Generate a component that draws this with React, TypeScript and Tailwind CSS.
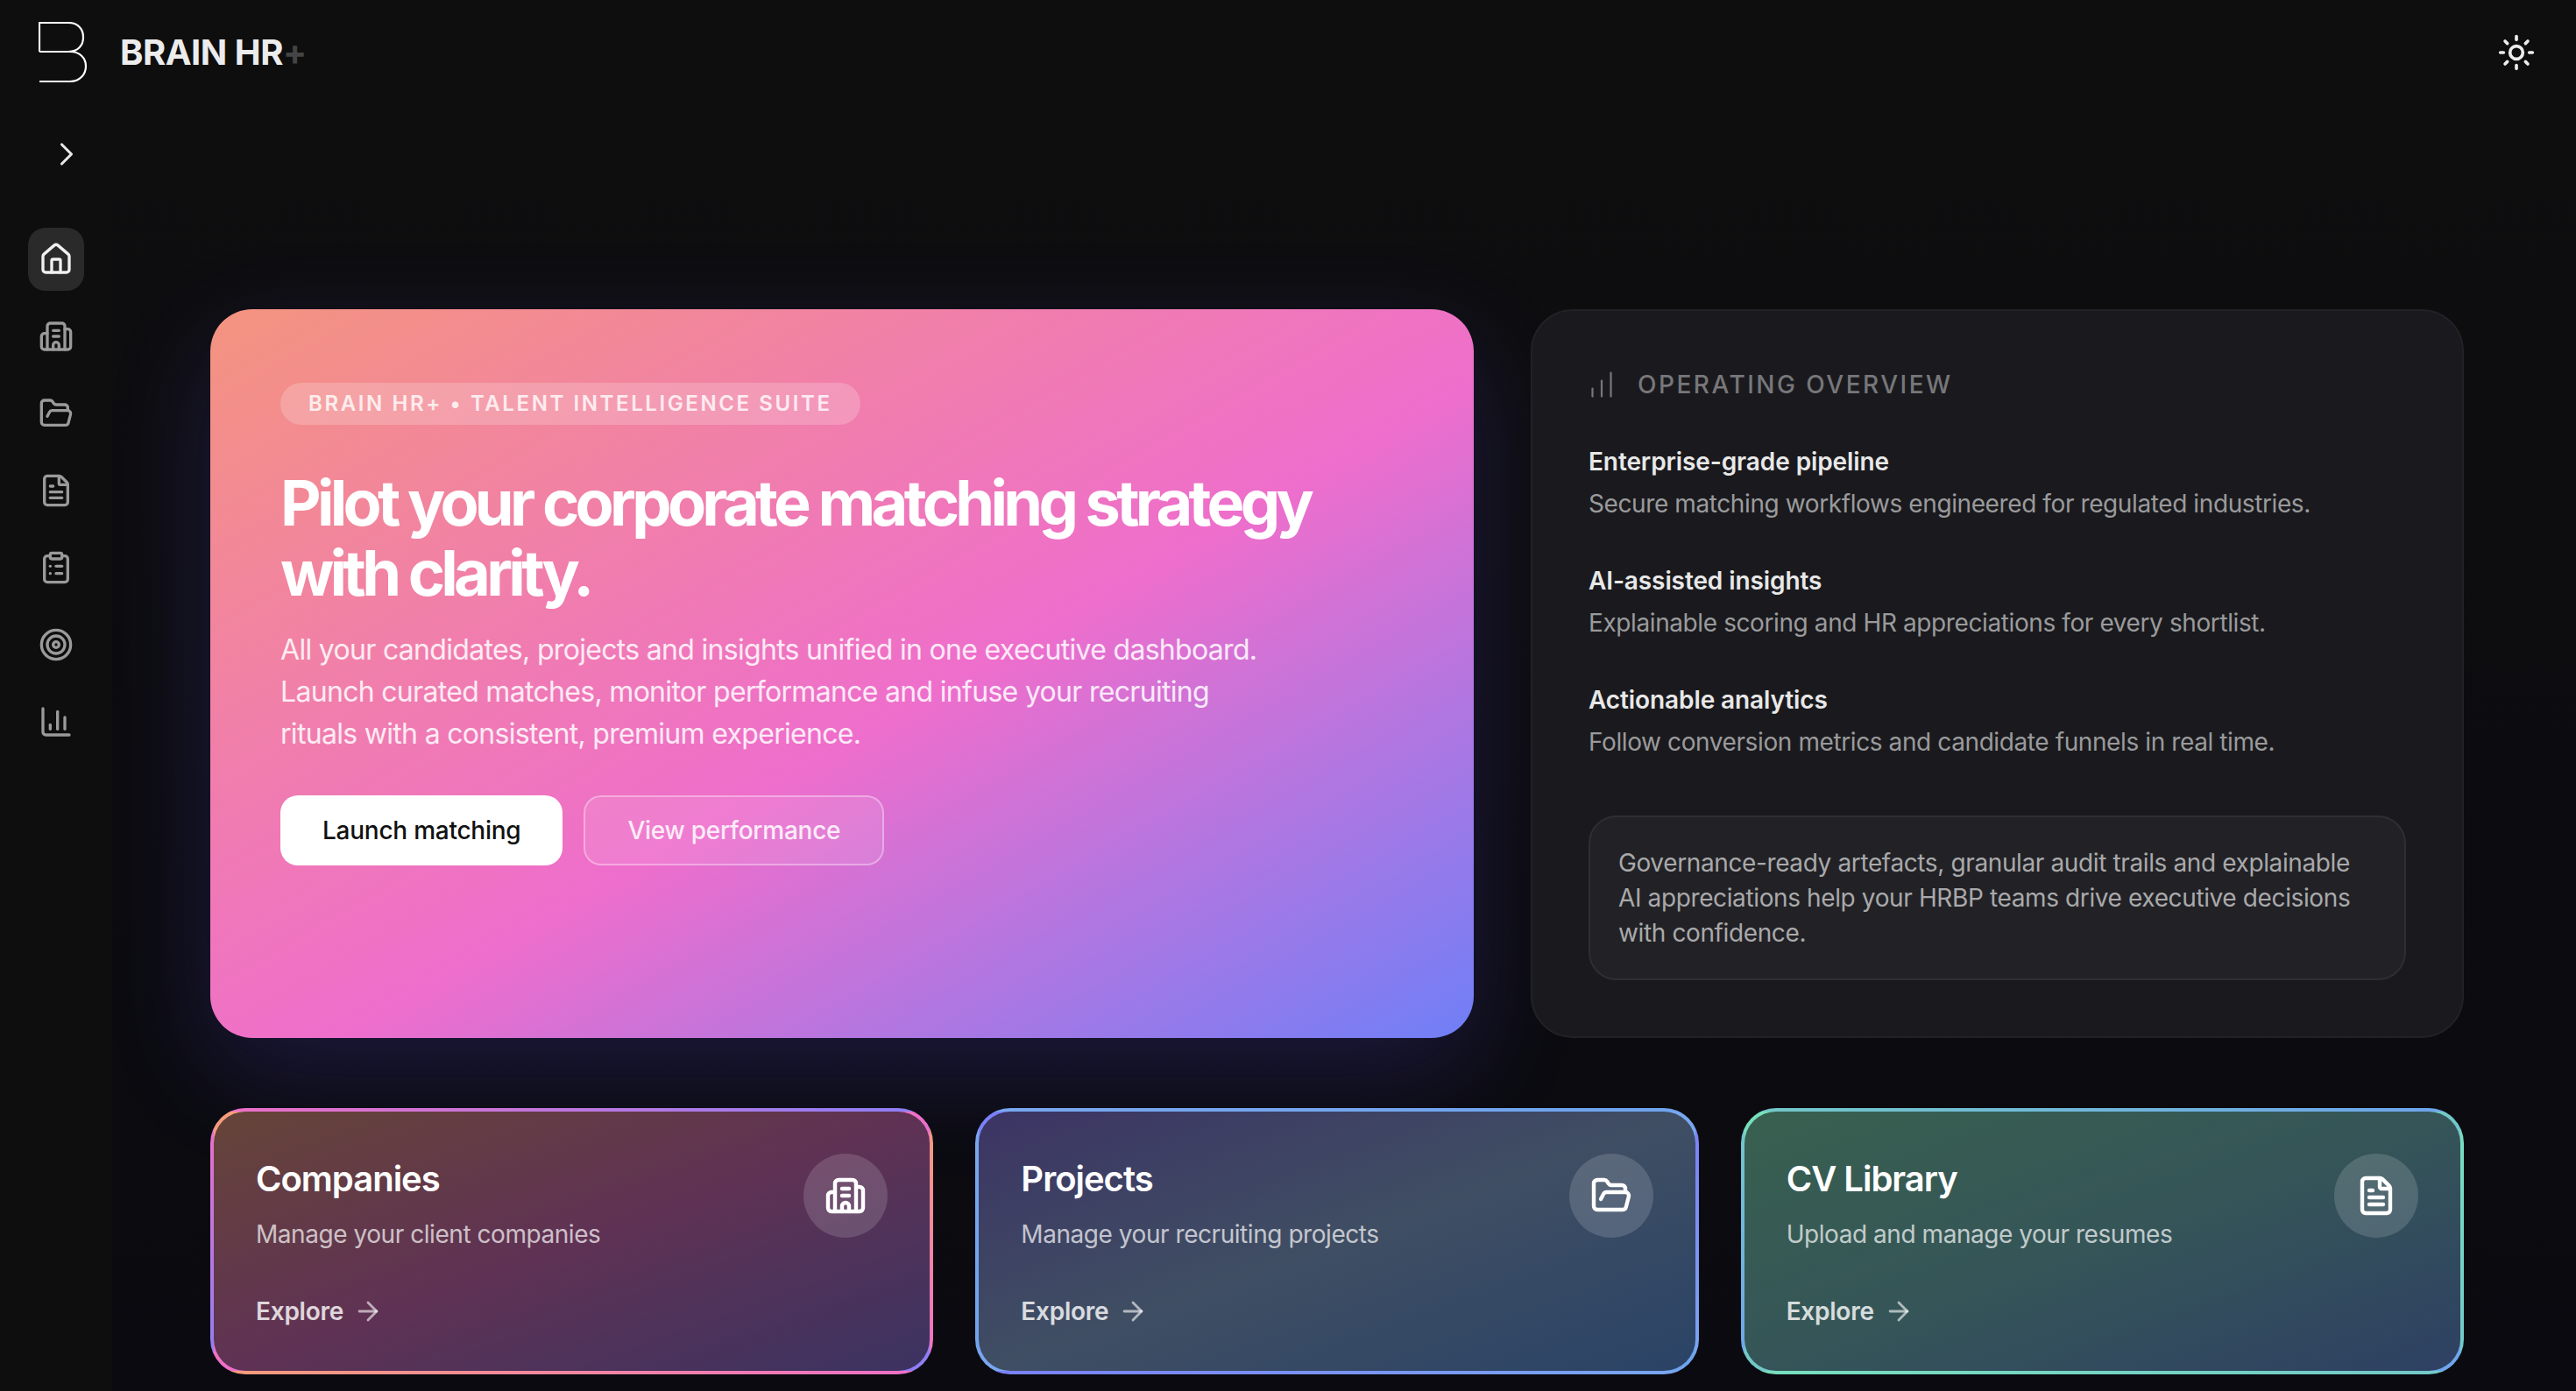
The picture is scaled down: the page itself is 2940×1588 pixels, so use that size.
import { ArrowRight, BarChart3, Building2, ChartNoAxesColumnIncreasing, ChevronRight, ClipboardList, FileText, FolderOpen, Home, Sun, Target } from "lucide-react";

const navItems = [Building2, FolderOpen, FileText, ClipboardList, Target, BarChart3];

const overview = [
  {
    title: "Enterprise-grade pipeline",
    text: "Secure matching workflows engineered for regulated industries.",
  },
  {
    title: "AI-assisted insights",
    text: "Explainable scoring and HR appreciations for every shortlist.",
  },
  {
    title: "Actionable analytics",
    text: "Follow conversion metrics and candidate funnels in real time.",
  },
];

function Logo() {
  return (
    <svg width="56" height="70" viewBox="0 0 56 70" fill="none" stroke="#fff" strokeWidth="2.2">
      <path d="M1 34V1h33c11 0 17 7 17 16.500S45 34 34 34H1h35c11 0 18 7 18 16.500S47 68 36 68H1" />
    </svg>
  );
}

function FeatureCard({
  title,
  text,
  icon: Icon,
  borderClass,
  fillClass,
}: {
  title: string;
  text: string;
  icon: typeof Building2;
  borderClass: string;
  fillClass: string;
}) {
  return (
    <div className={`h-[304px] flex-1 rounded-[40px] border-4 border-transparent ${borderClass}`}>
      <div className={`flex h-full items-start justify-between rounded-[36px] py-12 pl-[48px] pr-[48px] ${fillClass}`}>
        <div>
          <h3 className="text-[40px] leading-[58px] font-semibold tracking-[-1px] text-white">{title}</h3>
          <p className="mt-[14px] text-[28px] leading-[40px] tracking-[-0.45px] text-white/70">{text}</p>
          <div className="mt-[48px] flex items-center gap-[11px] text-[28px] leading-[40px] font-semibold tracking-[-0.25px] text-white/80">
            Explore
            <ArrowRight size={34} strokeWidth={2} className="text-white/60" />
          </div>
        </div>
        <div className="flex h-24 w-24 shrink-0 items-center justify-center rounded-full bg-white/15">
          <Icon size={48} strokeWidth={2.2} className="text-white" />
        </div>
      </div>
    </div>
  );
}

export default function App() {
  return (
    <div className="flex h-[1588px] overflow-hidden bg-[#0e0e0f] font-['Inter',sans-serif] text-white">
      <aside className="relative z-10 w-[128px] shrink-0 bg-[#0e0e0f]">
        <div className="flex h-[120px] items-center pl-[44px]">
          <Logo />
        </div>
        <div className="flex h-[112px] items-center pl-[54px]">
          <ChevronRight size={44} strokeWidth={1.7} className="text-[#e8e8e8]" />
        </div>
        <nav className="mt-[28px] flex flex-col items-center gap-4 pl-0">
          <div className="flex h-[72px] w-16 items-center justify-center rounded-[20px] bg-[#2a2a2b]">
            <Home size={40} className="text-[#f0f0f0]" />
          </div>
          {navItems.map((Icon, i) => (
            <div key={i} className="flex h-[72px] w-16 items-center justify-center">
              <Icon size={40} className="text-[#9a9a9a]" />
            </div>
          ))}
        </nav>
      </aside>

      <div className="flex min-w-0 flex-1 flex-col bg-[linear-gradient(to_bottom,#0e0e0f_10%,#0a0a10_100%)]">
        <header className="flex h-[120px] items-center justify-between pr-[46px]">
          <div className="-ml-[128px] flex pl-[137px]">
            <span className="relative z-20 text-[40px] font-bold tracking-[-0.5px] text-[#ececec]">
              BRAIN HR<span className="text-[#444]">+</span>
            </span>
          </div>
          <Sun size={44} className="text-[#ececec]" />
        </header>

        <main className="flex flex-1 flex-col gap-[80px] pt-[233px] pl-[112px] pr-[128px]">
          <div className="flex h-[832px] gap-[65px]">
            <section className="w-[1442px] shrink-0 rounded-[48px] bg-[linear-gradient(to_bottom_right,#f4947f_0%,#ee6ecc_55%,#6f7ff7_100%)] px-[80px] pt-[84px] shadow-[0_40px_120px_rgba(99,80,241,0.2)]">
              <span className="inline-block rounded-full bg-white/20 px-[32px] py-[10px] text-[24px] leading-[28px] font-semibold tracking-[2.6px] text-white/80">
                BRAIN HR+ • TALENT INTELLIGENCE SUITE
              </span>
              <h1 className="mt-[49px] max-w-[1260px] text-[72px] leading-[80px] font-bold tracking-[-4.7px] text-white">
                Pilot your corporate matching strategy with clarity.
              </h1>
              <p className="mt-[24px] max-w-[1136px] text-[32px] leading-[48px] tracking-[-0.69px] text-white/85">
                All your candidates, projects and insights unified in one executive dashboard. Launch curated matches, monitor performance and infuse your recruiting rituals with a consistent, premium experience.
              </p>
              <div className="mt-[46px] flex gap-6">
                <button className="h-20 rounded-[20px] bg-white px-12 text-[28px] font-medium tracking-[-0.25px] text-[#111]">Launch matching</button>
                <button className="h-20 rounded-[20px] border-2 border-white/35 bg-white/10 px-[48px] text-[28px] font-medium tracking-[-0.25px] text-white/85">View performance</button>
              </div>
            </section>

            <section className="flex flex-1 flex-col rounded-[48px] border-2 border-[#222226] bg-[#1a1a1e] px-[64px] pt-[64px]">
              <div className="flex items-center gap-[23px] text-[#77777a]">
                <ChartNoAxesColumnIncreasing size={36} strokeWidth={1.5} className="-ml-[3px]" />
                <span className="text-[28px] leading-[40px] font-medium tracking-[2.5px]">OPERATING OVERVIEW</span>
              </div>
              <div className="mt-[48px] flex flex-col gap-[48px]">
                {overview.map((item) => (
                  <div key={item.title}>
                    <div className="text-[28px] leading-[40px] font-semibold tracking-[-0.1px] text-[#e8e8e8]">{item.title}</div>
                    <div className="mt-[8px] text-[28px] leading-[40px] tracking-[-0.4px] text-[#9a9a9c]">{item.text}</div>
                  </div>
                ))}
              </div>
              <div className="mt-[64px] rounded-[32px] border-2 border-[#2f2f33] bg-[#222226] px-[32px] py-[32px] text-[28px] leading-[40px] tracking-[-0.38px] text-[#a9a9ab]">
                Governance-ready artefacts, granular audit trails and explainable AI appreciations help your HRBP teams drive executive decisions with confidence.
              </div>
            </section>
          </div>

          <div className="flex gap-[48px]">
            <FeatureCard
              title="Companies"
              text="Manage your client companies"
              icon={Building2}
              borderClass="bg-[linear-gradient(to_bottom_right,#f59e79,#ee6fc8_50%,#8b7ff7)]"
              fillClass="bg-[linear-gradient(to_bottom_right,#664438,#5f3254_50%,#3b3361)]"
            />
            <FeatureCard
              title="Projects"
              text="Manage your recruiting projects"
              icon={FolderOpen}
              borderClass="bg-[linear-gradient(to_bottom_right,#7b7ff7,#79a7f0_50%,#6ea4ee)]"
              fillClass="bg-[linear-gradient(to_bottom_right,#3c3464,#3f4e63_50%,#2a4366)]"
            />
            <FeatureCard
              title="CV Library"
              text="Upload and manage your resumes"
              icon={FileText}
              borderClass="bg-[linear-gradient(to_bottom_right,#78e0bd,#72c8c8_50%,#6ea4ee)]"
              fillClass="bg-[linear-gradient(to_bottom_right,#38604f,#355558_50%,#2e4063)]"
            />
          </div>
        </main>
      </div>
    </div>
  );
}
